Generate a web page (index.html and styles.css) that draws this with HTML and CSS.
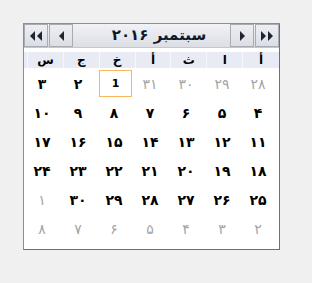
FILE: index.html
```html
<!DOCTYPE html>
<html lang="ar">
<head>
    <meta charset="UTF-8">
    <title>تقويم</title>
    <link rel="stylesheet" href="styles.css">
</head>
<body>
    <div class="calendar">
        <div class="cal-head">
            <button class="nav-btn" type="button"><span class="tri tri-left"></span><span class="tri tri-left"></span></button>
            <button class="nav-btn" type="button"><span class="tri tri-left"></span></button>
            <div class="title" dir="rtl">سبتمبر ۲۰۱۶</div>
            <button class="nav-btn" type="button"><span class="tri tri-right"></span></button>
            <button class="nav-btn" type="button"><span class="tri tri-right"></span><span class="tri tri-right"></span></button>
        </div>
        <div class="week" dir="rtl">
            <span>أ</span><span>ا</span><span>ث</span><span>أ</span><span>خ</span><span>ج</span><span>س</span>
        </div>
        <div class="days" dir="rtl">
            <span class="other">۲۸</span><span class="other">۲۹</span><span class="other">۳۰</span><span class="other">۳۱</span><span class="selected">1</span><span>۲</span><span>۳</span>
            <span>۴</span><span>۵</span><span>۶</span><span>۷</span><span>۸</span><span>۹</span><span>۱۰</span>
            <span>۱۱</span><span>۱۲</span><span>۱۳</span><span>۱۴</span><span>۱۵</span><span>۱۶</span><span>۱۷</span>
            <span>۱۸</span><span>۱۹</span><span>۲۰</span><span>۲۱</span><span>۲۲</span><span>۲۳</span><span>۲۴</span>
            <span>۲۵</span><span>۲۶</span><span>۲۷</span><span>۲۸</span><span>۲۹</span><span>۳۰</span><span class="other">۱</span>
            <span class="other">۲</span><span class="other">۳</span><span class="other">۴</span><span class="other">۵</span><span class="other">۶</span><span class="other">۷</span><span class="other">۸</span>
        </div>
    </div>
</body>
</html>
```

FILE: styles.css
```css
body {
    margin: 0;
    padding: 23px 0 0 23px;
    background-color: #f0f0f0;
    font-family: "DejaVu Sans", sans-serif;
    color: #000;
}
.calendar {
    width: 255px;
    height: 225px;
    background-color: #fff;
    border: 1px solid #8e8e8e;
    border-right-color: #707070;
    border-bottom-color: #707070;
}
.cal-head {
    display: flex;
    height: 23px;
    background: linear-gradient(#f1f2f6, #dcdee5);
    border-bottom: 1px solid #c4c7cf;
}
.nav-btn {
    width: 24px;
    height: 23px;
    margin: 0 1px 0 0;
    padding: 0;
    display: flex;
    align-items: center;
    justify-content: center;
    background: linear-gradient(#eceef2, #dcdee5);
    border: 1px solid #a9abb2;
}
.nav-btn:last-child {
    margin-right: 0;
}
.tri {
    width: 0;
    height: 0;
    border-top: 5px solid transparent;
    border-bottom: 5px solid transparent;
}
.tri-left {
    border-right: 5px solid #1e2530;
    margin: 0 1px;
}
.tri-right {
    border-left: 5px solid #1e2530;
    margin: 0 1px;
}
.title {
    flex: 1;
    text-align: center;
    font-size: 15px;
    font-weight: bold;
    line-height: 23px;
    padding-left: 14px;
    color: #101828;
}
.week {
    display: flex;
    height: 16px;
    margin-top: 4px;
    padding-left: 3px;
    background-color: #e8ebf3;
}
.week span {
    width: 35px;
    border-left: 1px solid #f6f7fa;
    text-align: center;
    font-size: 12px;
    font-weight: bold;
    line-height: 16px;
}
.week span:first-child {
    width: 36px;
}
.days {
    display: grid;
    grid-template-columns: repeat(7, 36px);
    grid-auto-rows: 29px;
    padding: 1px 3px 0 0;
}
.days span {
    display: flex;
    align-items: center;
    justify-content: center;
    font-size: 14px;
    font-weight: bold;
}
.days .other {
    color: #a4a4a4;
    font-weight: normal;
}
.days .selected {
    margin: 1px 0 1px 3px;
    border: 1px solid #f9b65c;
    font-size: 11px;
}
```
